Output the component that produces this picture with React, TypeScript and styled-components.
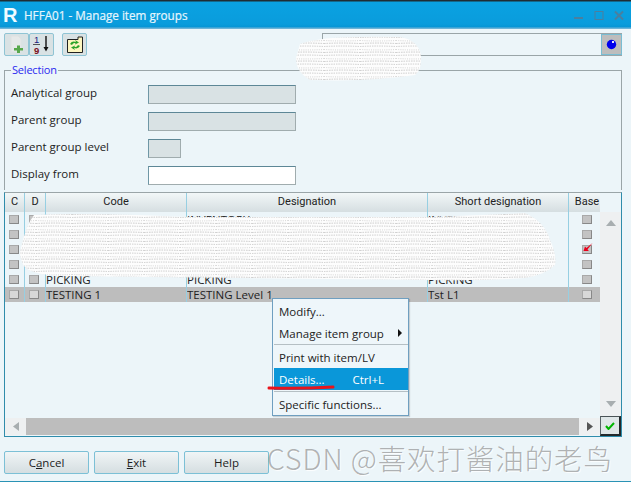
import React from "react";
import styled, { createGlobalStyle } from "styled-components";

const GlobalStyle = createGlobalStyle`
  html, body {
    margin: 0;
    padding: 0;
    background: #ecf5f9;
  }
  * {
    box-sizing: border-box;
  }
`;

const Window = styled.div`
  position: relative;
  width: 631px;
  height: 482px;
  overflow: hidden;
  display: flex;
  flex-direction: column;
  background: #ecf5f9;
  font-family: "Open Sans", "Noto Sans", sans-serif;
  font-size: 11.5px;
  color: #1c1c1c;
  border-bottom: 1px solid #2a93b5;
`;

const TitleBar = styled.div`
  height: 29px;
  flex: none;
  display: flex;
  align-items: center;
  padding: 0 7px 0 3px;
  background: linear-gradient(#1f2d33 0, #1f2d33 1px, #0aa2e2 2px, #0a9cdc 24px, #0795d5 27px, #6eb4d8 28px);
`;

const Logo = styled.span`
  width: 21px;
  font-family: "Liberation Sans", sans-serif;
  font-weight: 700;
  font-size: 20px;
  color: #f0fbff;
  margin-top: 1px;
`;

const Title = styled.span`
  flex: 1;
  color: #e6f6fd;
  font-family: "Open Sans", sans-serif;
  font-size: 11.7px;
  font-weight: 400;
  margin-top: 1px;
  -webkit-text-stroke: 0.2px #e6f6fd;
`;

const WindowButtons = styled.div`
  display: flex;
  gap: 10px;
  align-items: center;
  margin-top: 1px;
`;

const Toolbar = styled.div`
  height: 40px;
  flex: none;
  display: flex;
  align-items: flex-start;
  padding: 4px 9px 0 4px;
`;

const ToolButton = styled.button<{ $gap?: number }>`
  width: 25px;
  height: 23px;
  padding: 0;
  margin-left: ${(p) => p.$gap || 0}px;
  display: flex;
  align-items: center;
  justify-content: center;
  background: #d9e2e4;
  border: 1px solid #8fc4d4;
  border-radius: 2px;
`;

const SearchBox = styled.div`
  width: 300px;
  height: 23px;
  margin-left: auto;
  border-top: 1px solid #9aa5a8;
  border-left: 1px solid #9aa5a8;
  border-bottom: 1px solid #9aa5a8;
  display: flex;
  justify-content: flex-end;
`;

const Globe = styled.div`
  width: 21px;
  height: 21px;
  background: #bdbdbd;
  border: 1px solid #79bdd3;
  display: flex;
  align-items: center;
  justify-content: center;
`;

const Selection = styled.fieldset`
  flex: none;
  height: 126px;
  margin: -5px 9px 0 4px;
  padding: 5px 0 0 6px;
  border: 1px solid #9aa5a8;
  border-bottom: none;
  display: grid;
  grid-template-rows: repeat(4, 27px);
  align-content: start;
`;

const SelectionLegend = styled.legend`
  margin-left: 0;
  padding: 0 1px;
  font-size: 11px;
  letter-spacing: -0.2px;
  line-height: 12px;
  color: #2a2af0;
`;

const FormRow = styled.div`
  display: flex;
  align-items: center;
  height: 27px;
`;

const FormLabel = styled.label`
  width: 137px;
  padding-bottom: 4px;
  font-size: 11.5px;
  color: #222;
`;

const FormInput = styled.div<{ $w: number; $white?: boolean }>`
  width: ${(p) => p.$w}px;
  height: 19px;
  background: ${(p) => (p.$white ? "#ffffff" : "#d9e2e4")};
  border: 1px solid #a0acae;
  border-top-color: #5d8796;
  border-left-color: #6f97a6;
`;

const GridPanel = styled.div`
  position: relative;
  flex: none;
  height: 245px;
  margin: 2px 9px 0 4px;
  border: 1px solid #2f8cab;
  border-top-color: #9aa5a8;
  display: flex;
  flex-direction: column;
`;

const GridBody = styled.div`
  flex: 1;
  display: flex;
  min-height: 0;
`;

const Table = styled.div`
  width: 595px;
  flex: none;
`;

const Row = styled.div<{ $header?: boolean; $selected?: boolean }>`
  display: grid;
  grid-template-columns: 20px 21px 141px 241px 141px 31px;
  height: ${(p) => (p.$header ? "19px" : "15px")};
  background: ${(p) =>
    p.$header
      ? "linear-gradient(#f2f7f8, #d5dee1)"
      : p.$selected
        ? "#bdbdbd"
        : "transparent"};
`;

const HeadCell = styled.div`
  display: flex;
  align-items: center;
  justify-content: center;
  padding-bottom: 3px;
  font-family: Roboto, "Open Sans", sans-serif;
  font-size: 11px;
  color: #222;
  border-right: 1px solid #97cfe2;
  white-space: nowrap;
  &:last-child {
    border-right: none;
    padding-left: 5px;
  }
`;

const Cell = styled.div<{ $center?: boolean }>`
  display: flex;
  align-items: center;
  justify-content: ${(p) => (p.$center ? "center" : "flex-start")};
  padding-right: ${(p) => (p.$center ? "2px" : "0")};
  font-size: 11.5px;
  color: #222;
  border-right: 1px solid #97cfe2;
  white-space: nowrap;
  overflow: hidden;
  &:last-child {
    border-right: none;
    padding-left: 5px;
    padding-right: 0;
  }
`;

const CheckBox = styled.span<{ $light?: boolean }>`
  position: relative;
  display: block;
  width: 10px;
  height: 9px;
  background: ${(p) => (p.$light ? "#d8d8d8" : "#c3c3c3")};
  border: 1px solid #a9a9a9;
  border-bottom-color: #888;
  border-right-color: #888;
`;

const CheckMark = styled.svg`
  position: absolute;
  left: 0;
  top: -3px;
`;

const ScrollV = styled.div`
  flex: 1;
  margin-top: 19px;
  display: flex;
  flex-direction: column;
  align-items: center;
  justify-content: space-between;
  padding: 8px 0 9px;
  background: #eef0f1;
`;

const BottomBar = styled.div`
  height: 20px;
  flex: none;
  display: flex;
  align-items: center;
`;

const ScrollH = styled.div`
  flex: 1;
  height: 17px;
  display: flex;
  align-items: center;
  background: #eef0f1;
`;

const ScrollArrow = styled.div`
  width: 21px;
  display: flex;
  justify-content: center;
`;

const ScrollThumb = styled.div`
  flex: 1;
  height: 100%;
  background: #bdbdbd;
`;

const OkButton = styled.button`
  width: 21px;
  height: 20px;
  padding: 0;
  display: flex;
  align-items: center;
  justify-content: center;
  background: #dfe6e7;
  border: 1px solid #5a6467;
  border-top-color: #4a5356;
  border-right: 2px solid #23292b;
  border-bottom: 2px solid #23292b;
`;

const Footer = styled.div`
  display: flex;
  gap: 5px;
  padding: 14px 0 0 4px;
`;

const ActionButton = styled.button`
  width: 85px;
  height: 23px;
  padding: 0;
  font-family: "Open Sans", sans-serif;
  font-size: 11.5px;
  color: #1c1c1c;
  background: linear-gradient(#f0f5f6, #d5dee1);
  border: 1px solid #7cc0d6;
  border-radius: 2px;
  u {
    text-underline-offset: 1px;
  }
`;

const Menu = styled.div`
  position: absolute;
  left: 272px;
  top: 298px;
  width: 137px;
  height: 118px;
  padding: 1px 0 0 1px;
  background: #eef6fa;
  border: 1px solid #6f9fc0;
  box-shadow: 1px 1px 1px rgba(0, 0, 0, 0.15);
`;

const MenuItem = styled.div<{ $active?: boolean }>`
  height: 22px;
  display: flex;
  align-items: center;
  justify-content: space-between;
  padding: 0 9px 0 5px;
  font-size: 11.5px;
  color: ${(p) => (p.$active ? "#ffffff" : "#222")};
  background: ${(p) => (p.$active ? "#0a97d9" : "transparent")};
`;

const Shortcut = styled.span`
  margin-right: 15px;
`;

const MenuSeparator = styled.div<{ $top?: number }>`
  height: 1px;
  margin: ${(p) => p.$top || 0}px 0 1px 0;
  background: #b5bfc4;
`;

const SubArrow = styled.span`
  width: 0;
  height: 0;
  margin-right: -3px;
  border-left: 4px solid #111;
  border-top: 4px solid transparent;
  border-bottom: 4px solid transparent;
`;

const Overlay = styled.svg`
  position: absolute;
  left: 0;
  top: 0;
  pointer-events: none;
`;

const Watermark = styled.div`
  position: absolute;
  left: 267px;
  top: 440px;
  font-family: "Noto Sans CJK SC", "Open Sans", sans-serif;
  font-size: 28.5px;
  font-weight: 300;
  line-height: 36px;
  letter-spacing: 0.9px;
  white-space: nowrap;
  color: rgba(125, 125, 125, 0.58);
  text-shadow: 1px 1px 1px rgba(255, 255, 255, 0.9);
`;

const rows = [
  { code: "", name: "INVENTORY", short: "INVENTORY", base: false },
  { code: "", name: "", short: "", base: false },
  { code: "", name: "", short: "", base: true },
  { code: "", name: "", short: "", base: false },
  { code: "PICKING", name: "PICKING", short: "PICKING", base: false },
  { code: "TESTING 1", name: "TESTING Level 1", short: "Tst L1", base: false, selected: true },
];

const App: React.FC = () => {
  return (
    <Window>
      <GlobalStyle />
      <TitleBar>
        <Logo>R</Logo>
        <Title>HFFA01 - Manage item groups</Title>
        <WindowButtons>
          <svg width="11" height="11" viewBox="0 0 11 11">
            <rect x="1" y="7" width="9" height="2" fill="#4a7f9f" />
          </svg>
          <svg width="10" height="11" viewBox="0 0 10 11">
            <rect x="1" y="1.5" width="8" height="8" fill="none" stroke="#4a7f9f" strokeWidth="1" />
          </svg>
          <svg width="10" height="11" viewBox="0 0 10 11">
            <path d="M1 1.5 L9 9.5 M9 1.5 L1 9.5" stroke="#4a7f9f" strokeWidth="2" />
          </svg>
        </WindowButtons>
      </TitleBar>

      <Toolbar>
        <ToolButton>
          <svg width="17" height="19" viewBox="0 0 17 19">
            <path d="M3 1 H10 L13 4 V17 H3 Z" fill="#e6e9e9" stroke="#dfe2e2" />
            <path d="M6 13 H9 V10.5 H12 V13 H15 V15.5 H12 V18 H9 V15.5 H6 Z" fill="#58a84c" />
          </svg>
        </ToolButton>
        <ToolButton>
          <svg width="21" height="19" viewBox="0 0 21 19">
            <text x="3" y="8" fontFamily="Liberation Sans" fontSize="9.5" fill="#1a1a80">1</text>
            <path d="M2 9.5 H9" stroke="#555" />
            <text x="3" y="18.5" fontFamily="Liberation Sans" fontSize="9.5" fontWeight="700" fill="#7a1020">9</text>
            <path d="M15 1 V12" stroke="#111" strokeWidth="1.4" />
            <path d="M12.5 12 H17.5 L15 16.5 Z" fill="#111" />
          </svg>
        </ToolButton>
        <ToolButton $gap={8}>
          <svg width="18" height="18" viewBox="0 0 18 18">
            <path d="M1.5 3.5 H12 V1 H16.5 V16.5 H1.5 Z" fill="#fdf6c0" stroke="#222" />
            <path d="M4 8 Q6 4.5 10 6 L9 4 L13 6.5 L9 8.5 L9.5 7 Q7 6.5 6 9 Z" fill="#2aa32a" />
            <path d="M14 10 Q12 13.5 8 12 L9 14 L5 11.5 L9 9.5 L8.5 11 Q11 11.5 12 9 Z" fill="#2aa32a" />
          </svg>
        </ToolButton>
        <SearchBox>
          <Globe>
            <svg width="11" height="11" viewBox="0 0 11 11">
              <circle cx="5.5" cy="5.5" r="4.7" fill="#0000ee" />
              <rect x="6" y="2" width="2" height="2" fill="#e8e8ff" />
            </svg>
          </Globe>
        </SearchBox>
      </Toolbar>

      <Selection>
        <SelectionLegend>Selection</SelectionLegend>
        <FormRow>
          <FormLabel>Analytical group</FormLabel>
          <FormInput $w={148} />
        </FormRow>
        <FormRow>
          <FormLabel>Parent group</FormLabel>
          <FormInput $w={148} />
        </FormRow>
        <FormRow>
          <FormLabel>Parent group level</FormLabel>
          <FormInput $w={33} />
        </FormRow>
        <FormRow>
          <FormLabel>Display from</FormLabel>
          <FormInput $w={148} $white />
        </FormRow>
      </Selection>

      <GridPanel>
        <GridBody>
          <Table>
            <Row $header>
              <HeadCell>C</HeadCell>
              <HeadCell>D</HeadCell>
              <HeadCell>Code</HeadCell>
              <HeadCell>Designation</HeadCell>
              <HeadCell>Short designation</HeadCell>
              <HeadCell>Base</HeadCell>
            </Row>
            {rows.map((row, i) => (
              <Row key={i} $selected={row.selected}>
                <Cell $center>
                  <CheckBox $light={row.selected} />
                </Cell>
                <Cell $center>
                  <CheckBox $light={row.selected} />
                </Cell>
                <Cell>{row.code}</Cell>
                <Cell>{row.name}</Cell>
                <Cell>{row.short}</Cell>
                <Cell $center>
                  <CheckBox $light={row.selected}>
                    {row.base && (
                      <CheckMark width="10" height="10" viewBox="0 0 10 10">
                        <path d="M0.5 8 L2 3.5 L3.5 5 L9.5 0 L4.5 6.5 L6 8 Z" fill="#e8001c" />
                      </CheckMark>
                    )}
                  </CheckBox>
                </Cell>
              </Row>
            ))}
          </Table>
          <ScrollV>
            <svg width="10" height="6" viewBox="0 0 10 6">
              <path d="M5 0 L10 6 H0 Z" fill="#a8aeb0" />
            </svg>
            <svg width="10" height="6" viewBox="0 0 10 6">
              <path d="M0 0 H10 L5 6 Z" fill="#a8aeb0" />
            </svg>
          </ScrollV>
        </GridBody>
        <BottomBar>
          <ScrollH>
            <ScrollArrow>
              <svg width="6" height="9" viewBox="0 0 6 9">
                <path d="M6 0 V9 L0 4.5 Z" fill="#a8aeb0" />
              </svg>
            </ScrollArrow>
            <ScrollThumb />
            <ScrollArrow>
              <svg width="6" height="9" viewBox="0 0 6 9">
                <path d="M0 0 V9 L6 4.5 Z" fill="#555" />
              </svg>
            </ScrollArrow>
          </ScrollH>
          <OkButton>
            <svg width="10" height="8" viewBox="0 0 10 8">
              <path d="M1 4 L3.5 7 L9 1" stroke="#00b400" strokeWidth="2" fill="none" />
            </svg>
          </OkButton>
        </BottomBar>
      </GridPanel>

      <Footer>
        <ActionButton>
          C<u>a</u>ncel
        </ActionButton>
        <ActionButton>
          <u>E</u>xit
        </ActionButton>
        <ActionButton>Help</ActionButton>
      </Footer>

      <Menu>
        <MenuItem>Modify...</MenuItem>
        <MenuItem>
          Manage item group
          <SubArrow />
        </MenuItem>
        <MenuSeparator />
        <MenuItem>Print with item/LV</MenuItem>
        <MenuItem $active>
          Details...
          <Shortcut>Ctrl+L</Shortcut>
        </MenuItem>
        <MenuSeparator $top={1} />
        <MenuItem>Specific functions...</MenuItem>
      </Menu>

      <Overlay width="631" height="482" viewBox="0 0 631 482">
        <defs>
          <pattern id="scrib" width="36" height="9" patternUnits="userSpaceOnUse">
            <rect width="36" height="9" fill="#fdfdfd" />
            <path d="M0 1.5 Q18 0.6 36 1.5" stroke="#bdbdbd" strokeWidth="0.8" strokeDasharray="1.4 1" fill="none" />
            <path d="M0 4.5 Q18 5.4 36 4.5" stroke="#c6c6c6" strokeWidth="0.8" strokeDasharray="1 1.2" fill="none" />
            <path d="M0 7.5 Q18 6.6 36 7.5" stroke="#bdbdbd" strokeWidth="0.8" strokeDasharray="1.6 0.9" fill="none" />
          </pattern>
        </defs>
        <path
          d="M300 44 Q320 35 400 37 Q418 40 421 55 Q422 70 415 75 Q370 82 310 80 Q296 72 296 58 Z"
          fill="url(#scrib)"
        />
        <path
          d="M34 215 Q80 212 190 217 L430 217 Q490 215 525 213 Q545 222 550 240 Q557 255 555 265 Q545 275 525 278 Q480 281 430 280 L240 278 L60 276 Q30 274 24 266 Q18 255 21 248 Q26 225 34 215 Z"
          fill="url(#scrib)"
        />
        <path d="M269 388 Q300 389 333 387" stroke="#e8141c" strokeWidth="3" strokeLinecap="round" fill="none" />
      </Overlay>

      <Watermark>CSDN @喜欢打酱油的老鸟</Watermark>
    </Window>
  );
};

export default App;
